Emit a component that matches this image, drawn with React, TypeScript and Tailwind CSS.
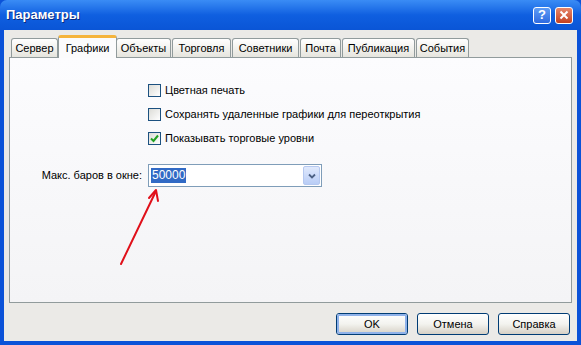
import React from 'react'

const tabs = ['Сервер', 'Графики', 'Объекты', 'Торговля', 'Советники', 'Почта', 'Публикация', 'События']
const tabWidths = [47, 59, 55, 59, 67, 41, 73, 53]

function CheckBox({ checked, label }: { checked?: boolean; label: string }) {
  return (
    <div className="flex items-center gap-[4px] h-[13px]">
      <div className="w-[13px] h-[13px] border border-[#1c5180] bg-gradient-to-br from-[#dcdcd7] to-white flex items-center justify-center">
        {checked && (
          <svg width="9" height="9" viewBox="0 0 9 9">
            <path d="M1 4.5 L3.5 7 L8 1.5" stroke="#21a121" strokeWidth="2" fill="none" />
          </svg>
        )}
      </div>
      <span className="text-black leading-none">{label}</span>
    </div>
  )
}

function Btn({ label, focused }: { label: string; focused?: boolean }) {
  return (
    <div className="w-[72px] h-[22px] rounded-[3px] border border-[#003c74] bg-gradient-to-b from-white via-[#f3f3ef] to-[#d6d0c5] flex items-center justify-center">
      <div
        className={
          focused
            ? 'w-full h-full rounded-[2px] border-2 border-[#8fb2ea] flex items-center justify-center'
            : 'w-full h-full flex items-center justify-center'
        }
      >
        <span className="text-black">{label}</span>
      </div>
    </div>
  )
}

export default function App() {
  return (
    <div
      className="w-[581px] h-[345px] flex flex-col text-[11px] overflow-hidden bg-[#0b52d8]"
      style={{ fontFamily: '"Liberation Sans", Arial, sans-serif' }}
    >
      {/* title bar */}
      <div className="h-[30px] shrink-0 flex items-center justify-between pl-[6px] pr-[8px] rounded-t-[7px] bg-gradient-to-b from-[#3a8cf5] via-[#0f5fe0] to-[#0a55d6]">
        <span className="text-white font-bold text-[13px] [text-shadow:1px_1px_0_#0a2a80]">Параметры</span>
        <div className="flex gap-[4px]">
          <div className="w-[18px] h-[17px] rounded-[3px] border border-white bg-gradient-to-b from-[#5f9cf5] to-[#2f6ae0] flex items-center justify-center text-white font-bold text-[13px]">
            ?
          </div>
          <div className="w-[18px] h-[17px] rounded-[3px] border border-white bg-gradient-to-b from-[#e6866a] to-[#c3401e] flex items-center justify-center">
            <svg width="10" height="10" viewBox="0 0 10 10">
              <path d="M1.5 1.5 L8.5 8.5 M8.5 1.5 L1.5 8.5" stroke="white" strokeWidth="2" />
            </svg>
          </div>
        </div>
      </div>

      {/* body */}
      <div className="flex-1 mx-[4px] mb-[4px] bg-[#ebeae7] px-[5px] pt-[5px] flex flex-col">
        {/* tabs */}
        <div className="flex items-end h-[22px] pl-[2px] relative z-10">
          {tabs.map((t, i) =>
            i === 1 ? (
              <div
                key={t}
                style={{ width: tabWidths[i] }}
                className="h-[23px] -mb-px border border-b-0 border-[#919b9c] border-t-[3px] border-t-[#f5b43c] rounded-t-[3px] bg-[#fbfbfc] flex items-center justify-center text-black -mx-[1px]"
              >
                {t}
              </div>
            ) : (
              <div
                key={t}
                style={{ width: tabWidths[i] }}
                className="h-[19px] border border-b-0 border-[#919b9c] rounded-t-[3px] bg-gradient-to-b from-white to-[#e6e5de] flex items-center justify-center text-black mr-[1px]"
              >
                {t}
              </div>
            )
          )}
        </div>

        {/* panel */}
        <div className="relative h-[246px] border border-[#919b9c] bg-gradient-to-b from-[#fcfcfe] to-[#f4f4f6]">
          <div className="grid grid-cols-[138px_1fr] pt-[26px]">
            <div />
            <div className="flex flex-col gap-[11px]">
              <CheckBox label="Цветная печать" />
              <CheckBox label="Сохранять удаленные графики для переоткрытия" />
              <CheckBox checked label="Показывать торговые уровни" />
            </div>
            <div className="flex items-center justify-end pr-[6px] mt-[19px] h-[23px]">
              <span className="text-black">Макс. баров в окне:</span>
            </div>
            <div className="mt-[19px]">
              <div className="w-[174px] h-[23px] border border-[#7f9db9] bg-white flex items-center pl-[2px] pr-[1px]">
                <span className="bg-[#316ac5] text-white px-[1px] leading-[15px] text-[12px]">50000</span>
                <div className="flex-1" />
                <div className="w-[17px] h-[19px] rounded-[2px] border border-[#b5c8f0] bg-gradient-to-b from-[#e0e9fc] to-[#b9cdf6] flex items-center justify-center">
                  <svg width="8" height="6" viewBox="0 0 8 6">
                    <path d="M1 1.5 L4 4.5 L7 1.5" stroke="#4d6185" strokeWidth="1.8" fill="none" />
                  </svg>
                </div>
              </div>
            </div>
          </div>

          {/* annotation arrow */}
          <svg className="absolute left-0 top-0" width="558" height="246" viewBox="0 0 558 246">
            <path d="M111 206 L146 133" stroke="#e0101a" strokeWidth="2" strokeLinecap="round" fill="none" />
            <path d="M139 140 L146 132 L148 143" stroke="#e0101a" strokeWidth="2" strokeLinecap="round" strokeLinejoin="round" fill="none" />
          </svg>
        </div>

        {/* buttons */}
        <div className="flex justify-end gap-[9px] mt-[10px] pr-[2px]">
          <Btn label="OK" focused />
          <Btn label="Отмена" />
          <Btn label="Справка" />
        </div>
      </div>
    </div>
  )
}
